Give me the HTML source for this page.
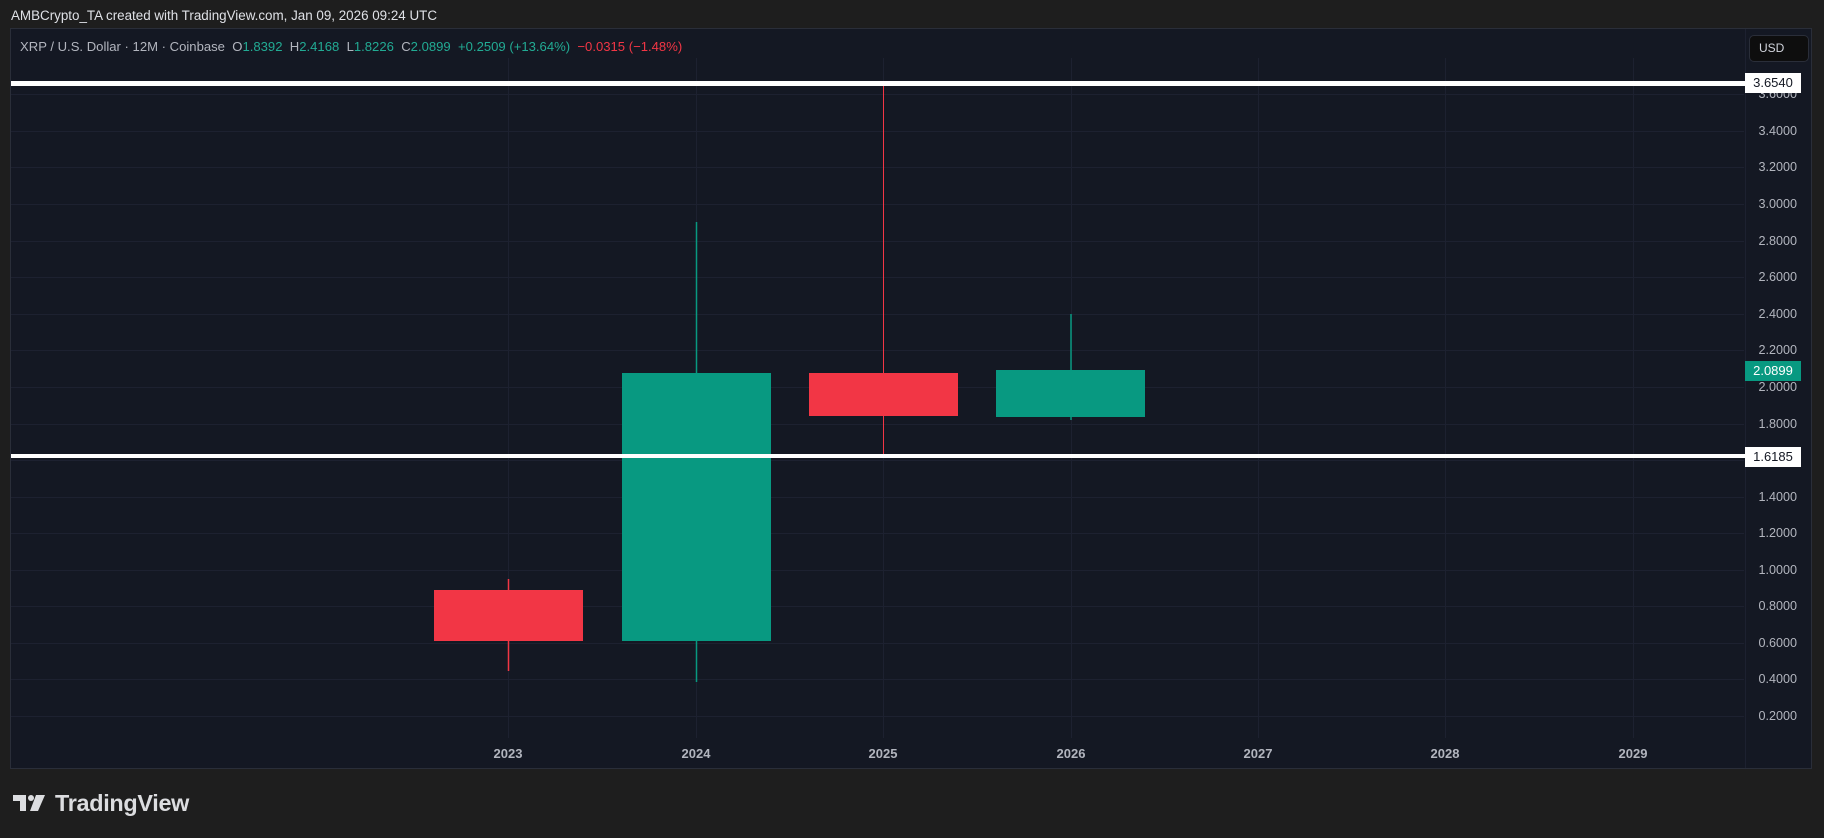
<!DOCTYPE html>
<html><head><meta charset="utf-8"><style>
body{margin:0;width:1824px;height:838px;background:#1e1e1e;overflow:hidden;font-family:"Liberation Sans",sans-serif;position:relative}
.cap{position:absolute;left:11px;top:8px;color:#dfe1e6;font-size:13.4px}
.panel{position:absolute;left:10px;top:28px;width:1802px;height:741px;background:#141823;border:1px solid #2a2e39;box-sizing:border-box}
.hdr{position:absolute;left:20px;top:39px;font-size:13.1px;color:#b2b5be;white-space:pre}
.g{color:#22ab94}.r{color:#f23645}
.lbl{position:absolute;right:27px;font-size:12.6px;color:#b2b5be}
.yr{position:absolute;top:746px;font-size:13px;font-weight:bold;color:#b2b5be;width:60px;text-align:center}
.box{position:absolute;left:1745px;width:56px;height:20px;font-size:13px;text-align:center;line-height:20px}
.usd{position:absolute;left:1749px;top:35px;width:60px;height:27px;background:#0e0e0e;border:1px solid #2a2e39;border-radius:5px;box-sizing:border-box;color:#d1d4dc;font-size:12px;line-height:25px;padding-left:9px}
.logo{position:absolute;left:55px;top:790px;font-size:23.4px;font-weight:bold;color:#dcdde0;letter-spacing:-0.3px}
</style></head><body>
<div class="cap">AMBCrypto_TA created with TradingView.com, Jan 09, 2026 09:24 UTC</div>
<div class="panel"></div>
<svg style="position:absolute;left:0;top:0" width="1824" height="838">
<g stroke="#1d2130" stroke-width="1">
<line x1="11" x2="1744" y1="94.5" y2="94.5"/><line x1="11" x2="1744" y1="131.5" y2="131.5"/><line x1="11" x2="1744" y1="167.5" y2="167.5"/><line x1="11" x2="1744" y1="204.5" y2="204.5"/><line x1="11" x2="1744" y1="241.5" y2="241.5"/><line x1="11" x2="1744" y1="277.5" y2="277.5"/><line x1="11" x2="1744" y1="314.5" y2="314.5"/><line x1="11" x2="1744" y1="350.5" y2="350.5"/><line x1="11" x2="1744" y1="387.5" y2="387.5"/><line x1="11" x2="1744" y1="424.5" y2="424.5"/><line x1="11" x2="1744" y1="460.5" y2="460.5"/><line x1="11" x2="1744" y1="497.5" y2="497.5"/><line x1="11" x2="1744" y1="533.5" y2="533.5"/><line x1="11" x2="1744" y1="570.5" y2="570.5"/><line x1="11" x2="1744" y1="606.5" y2="606.5"/><line x1="11" x2="1744" y1="643.5" y2="643.5"/><line x1="11" x2="1744" y1="679.5" y2="679.5"/><line x1="11" x2="1744" y1="716.5" y2="716.5"/>
<line y1="58" y2="738" x1="508.5" x2="508.5"/><line y1="58" y2="738" x1="696.5" x2="696.5"/><line y1="58" y2="738" x1="883.5" x2="883.5"/><line y1="58" y2="738" x1="1071.5" x2="1071.5"/><line y1="58" y2="738" x1="1258.5" x2="1258.5"/><line y1="58" y2="738" x1="1445.5" x2="1445.5"/><line y1="58" y2="738" x1="1633.5" x2="1633.5"/>
</g>
<line x1="1745.5" y1="29" x2="1745.5" y2="768" stroke="#1d2130"/>
<line x1="508.5" y1="579" x2="508.5" y2="671" stroke="#f23645" stroke-width="1.5"/>
<rect x="434" y="590" width="149" height="51" fill="#f23645"/>
<line x1="696.5" y1="222" x2="696.5" y2="682" stroke="#089981" stroke-width="1.5"/>
<rect x="622" y="373" width="149" height="268" fill="#089981"/>
<line x1="883.5" y1="84" x2="883.5" y2="457" stroke="#f23645" stroke-width="1"/>
<rect x="809" y="373" width="149" height="43" fill="#f23645"/>
<line x1="1071" y1="314" x2="1071" y2="420" stroke="#089981" stroke-width="1.5"/>
<rect x="996" y="370" width="149" height="47" fill="#089981"/>
<rect x="11" y="81" width="1734" height="5" fill="#fff"/>
<rect x="11" y="454" width="1734" height="4" fill="#fff"/>
</svg>
<div class="hdr">XRP / U.S. Dollar · 12M · Coinbase  O<span class="g">1.8392</span>  H<span class="g">2.4168</span>  L<span class="g">1.8226</span>  C<span class="g">2.0899</span>  <span class="g">+0.2509 (+13.64%)</span>  <span class="r">−0.0315 (−1.48%)</span></div>
<div class="usd">USD</div>
<div class="lbl" style="top:87px">3.6000</div>
<div class="lbl" style="top:124px">3.4000</div>
<div class="lbl" style="top:160px">3.2000</div>
<div class="lbl" style="top:197px">3.0000</div>
<div class="lbl" style="top:234px">2.8000</div>
<div class="lbl" style="top:270px">2.6000</div>
<div class="lbl" style="top:307px">2.4000</div>
<div class="lbl" style="top:343px">2.2000</div>
<div class="lbl" style="top:380px">2.0000</div>
<div class="lbl" style="top:417px">1.8000</div>
<div class="lbl" style="top:490px">1.4000</div>
<div class="lbl" style="top:526px">1.2000</div>
<div class="lbl" style="top:563px">1.0000</div>
<div class="lbl" style="top:599px">0.8000</div>
<div class="lbl" style="top:636px">0.6000</div>
<div class="lbl" style="top:672px">0.4000</div>
<div class="lbl" style="top:709px">0.2000</div>
<div class="box" style="top:73px;background:#fff;color:#131722">3.6540</div>
<div class="box" style="top:361px;background:#089981;color:#fff">2.0899</div>
<div class="box" style="top:447px;background:#fff;color:#131722">1.6185</div>
<div class="yr" style="left:478px">2023</div>
<div class="yr" style="left:666px">2024</div>
<div class="yr" style="left:853px">2025</div>
<div class="yr" style="left:1041px">2026</div>
<div class="yr" style="left:1228px">2027</div>
<div class="yr" style="left:1415px">2028</div>
<div class="yr" style="left:1603px">2029</div>
<svg style="position:absolute;left:13px;top:795px" width="32" height="16"><path d="M0 0H13V16H7V6H0Z" fill="#dcdde0"/><circle cx="18" cy="3" r="3" fill="#dcdde0"/><path d="M23 0H32L25 16H17Z" fill="#dcdde0"/></svg>
<div class="logo">TradingView</div>
</body></html>
